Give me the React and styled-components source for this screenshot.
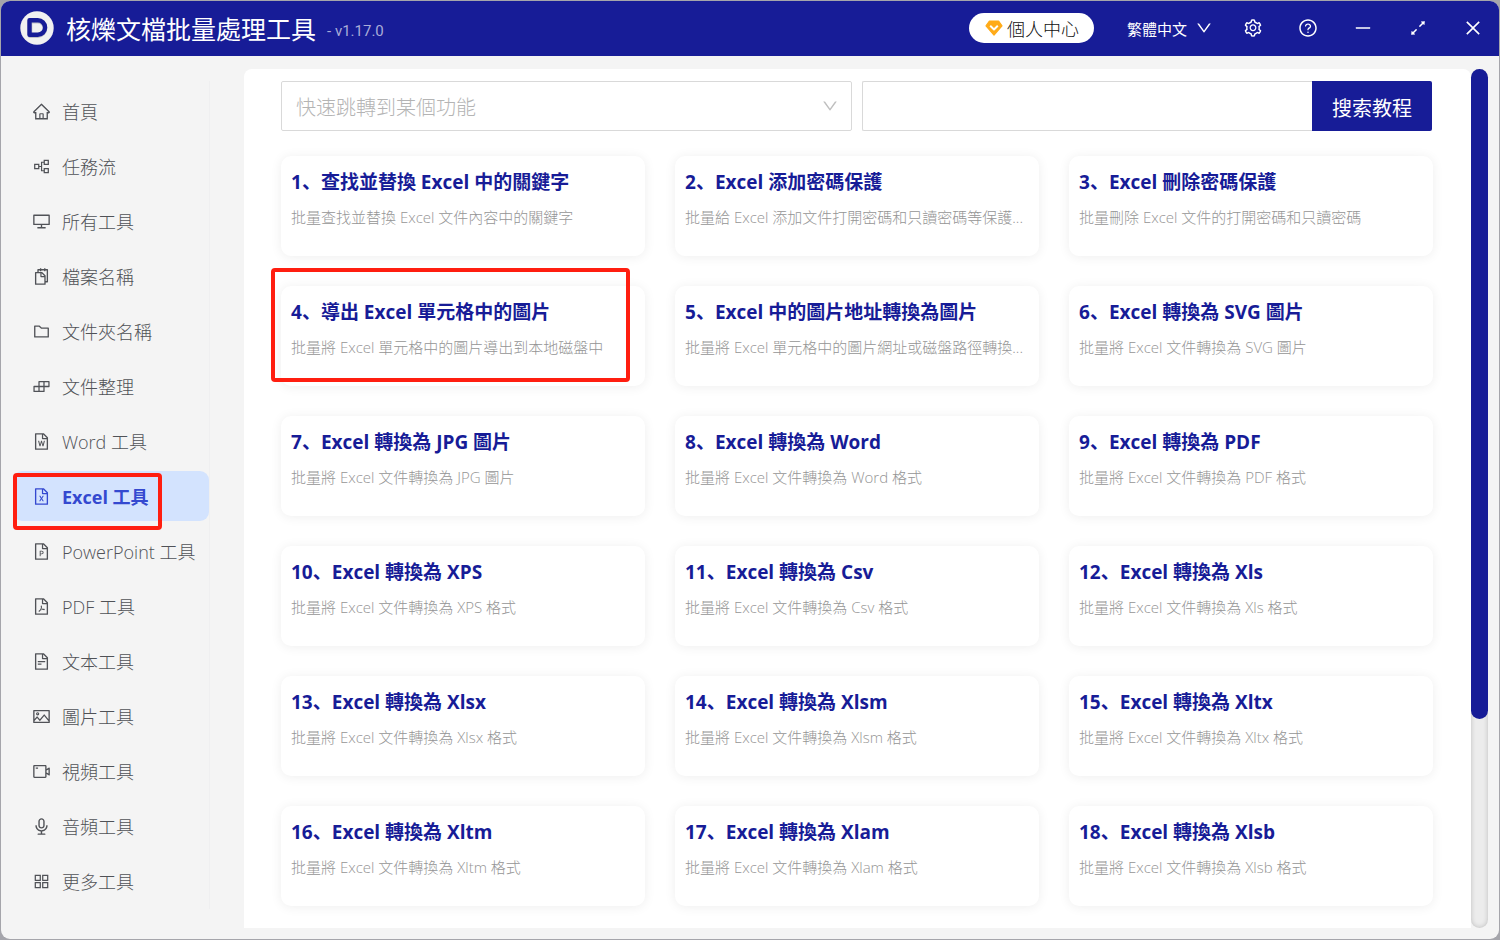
import React from "react";
import styled, { createGlobalStyle, css } from "styled-components";
import {
  AiOutlineHome, AiOutlinePartition, AiOutlineDesktop, AiOutlineSnippets, AiOutlineFolder,
  AiOutlineBuild, AiOutlineFileWord, AiOutlineFileExcel, AiOutlineFilePpt, AiOutlineFilePdf,
  AiOutlineFileText, AiOutlinePicture, AiOutlineVideoCamera, AiOutlineAudio, AiOutlineAppstore,
  AiOutlineDown, AiOutlineSetting, AiOutlineQuestionCircle, AiOutlineMinus,
  AiOutlineArrowsAlt, AiOutlineClose,
} from "react-icons/ai";

const navy = "#171c97";

const GlobalStyle = createGlobalStyle`
  * { box-sizing: border-box; }
  body {
    margin: 0;
    background: #a5a5ab;
    font-family: "Open Sans", "Noto Sans", "Noto Sans CJK SC", sans-serif;
  }
  button, input, select { font: inherit; }
`;

const Window = styled.div`
  min-height: calc(100vh - 2px);
  margin: 1px;
  display: flex;
  flex-direction: column;
  background: #f4f4f4;
  border-radius: 9px;
  overflow: hidden;
`;

const TitleBar = styled.header`
  display: flex;
  align-items: center;
  height: 55px;
  padding: 0 8px 1px 19px;
  background: ${navy};
  color: #fff;
`;

const AppName = styled.h1`
  margin: 2px 0 0 12px;
  font-size: 25px;
  line-height: 36px;
  font-weight: 400;
`;

const Version = styled.span`
  margin: 5px auto 0 11px;
  font-family: Roboto, sans-serif;
  font-size: 15px;
  color: #a9acd8;
`;

const AccountButton = styled.button`
  display: flex;
  align-items: center;
  gap: 4px;
  height: 30px;
  padding: 0 15px 0 16px;
  border: 0;
  border-radius: 15px;
  background: #fff;
  color: #111;
  font-size: 18px;
  font-weight: 300;
`;

const LanguageButton = styled.button`
  display: flex;
  align-items: center;
  gap: 8px;
  margin: 0 22px 0 33px;
  padding: 0;
  border: 0;
  background: none;
  color: #fff;
  font-size: 15px;
`;

const WindowActions = styled.div`
  display: flex;
  gap: 19px;
`;

const IconButton = styled.button`
  display: flex;
  align-items: center;
  justify-content: center;
  width: 36px;
  height: 36px;
  padding: 0;
  border: 0;
  background: none;
  color: #fff;
`;

const Body = styled.div`
  flex: 1;
  display: flex;
  padding: 13px 11px 11px 12px;
`;

const Sidebar = styled.nav`
  flex: 0 0 196px;
  display: flex;
  flex-direction: column;
  gap: 5px;
  margin: 12px 35px 19px 0;
  padding-top: 5px;
  box-shadow: 1px 0 0 #efeff0;
`;

const NavItem = styled.a`
  position: relative;
  display: flex;
  align-items: center;
  gap: 11px;
  height: 50px;
  padding-left: 19px;
  border-radius: 9px;
  color: #505257;
  font-size: 18px;
  font-weight: 300;
  white-space: nowrap;
  text-decoration: none;
  ${(p) => p.$active && css`
    background: #d3e3fe;
    color: #3449d0;
    font-weight: 700;
  `}
`;

const NavLabel = styled.span`
  padding-bottom: 1px;
`;

const Marker = styled.span`
  position: absolute;
  border: 4px solid #ff1e10;
  border-radius: 4px;
  pointer-events: none;
`;

const NavMarker = styled(Marker)`
  top: 2px;
  left: 0;
  width: 149px;
  height: 57px;
`;

const CardMarker = styled(Marker)`
  top: -18px;
  left: -10px;
  width: 359px;
  height: 114px;
`;

const Panel = styled.main`
  flex: 1;
  min-width: 0;
  padding: 12px 38px 22px 37px;
  background: #fff;
  border-radius: 8px 8px 0 0;
`;

const SearchRow = styled.div`
  display: flex;
  gap: 10px;
  margin: 0 1px 25px 0;
`;

const JumpField = styled.div`
  position: relative;
  flex: 1;
  color: #bfbfbf;
`;

const JumpSelect = styled.select`
  appearance: none;
  width: 100%;
  height: 50px;
  padding: 3px 40px 0 14px;
  border: 1px solid #d9d9d9;
  border-radius: 2px;
  background: #fff;
  color: #b4b4b4;
  font-size: 20px;
  font-weight: 300;
`;

const JumpArrow = styled(AiOutlineDown)`
  position: absolute;
  top: 16px;
  right: 13px;
  pointer-events: none;
`;

const TutorialSearch = styled.form`
  flex: 1;
  display: flex;
`;

const SearchInput = styled.input`
  flex: 1;
  min-width: 0;
  height: 50px;
  padding: 0 14px;
  border: 1px solid #d9d9d9;
  border-right: 0;
  border-radius: 2px 0 0 2px;
  font-size: 20px;
`;

const SearchButton = styled.button`
  width: 120px;
  padding: 2px 0 0;
  border: 0;
  border-radius: 0 2px 2px 0;
  background: ${navy};
  color: #fff;
  font-size: 20px;
`;

const CardGrid = styled.div`
  display: grid;
  grid-template-columns: repeat(3, minmax(0, 1fr));
  gap: 30px;
`;

const Card = styled.article`
  position: relative;
  height: 100px;
  padding: 12px 10px;
  border-radius: 10px;
  background: #fff;
  box-shadow: 0 1px 12px rgba(0, 0, 0, 0.07);
`;

const CardTitle = styled.h2`
  margin: 0 0 9px;
  color: ${navy};
  font-size: 19px;
  line-height: 28px;
  font-weight: 700;
  white-space: nowrap;
`;

const CardText = styled.p`
  margin: 0;
  color: #959595;
  font-size: 15px;
  line-height: 24px;
  font-weight: 300;
  white-space: nowrap;
  overflow: hidden;
  text-overflow: ellipsis;
`;

const ScrollTrack = styled.div`
  flex: 0 0 17px;
  display: flex;
  flex-direction: column;
  border-radius: 9px;
  background: #ececec;
  box-shadow: inset 0 0 5px rgba(0, 0, 0, 0.2);
  &::after { content: ""; flex: 209; }
`;

const ScrollThumb = styled.div`
  flex: 650;
  border-radius: 9px;
  background: ${navy};
`;

const Logo = () => (
  <svg width="34" height="34" viewBox="0 0 34 34" aria-hidden="true">
    <circle cx="17" cy="17" r="16.7" fill="#f1f1f1" />
    <path d="M10 10.2h7.8a7.2 7.2 0 0 1 0 14.4H10z" fill="none" stroke="#c0c0c6" strokeWidth="4.6" strokeLinejoin="round" />
    <path d="M9.5 9.2h8.3a7.2 7.2 0 0 1 0 14.6H9.5z" fill="none" stroke={navy} strokeWidth="4.4" strokeLinejoin="round" />
  </svg>
);

const Diamond = () => (
  <svg width="18" height="16" viewBox="0 0 18 16" aria-hidden="true">
    <path d="M4.4 1h9.2l3.4 4.8L9 15 1 5.8z" fill="#ffab19" stroke="#ffab19" strokeWidth="1.2" strokeLinejoin="round" />
    <path d="M5.2 5.8 9 9.4l3.8-3.6" fill="none" stroke="#fff" strokeWidth="2" strokeLinejoin="round" />
  </svg>
);

const navItems = [
  [AiOutlineHome, "首頁"],
  [AiOutlinePartition, "任務流"],
  [AiOutlineDesktop, "所有工具"],
  [AiOutlineSnippets, "檔案名稱"],
  [AiOutlineFolder, "文件夾名稱"],
  [AiOutlineBuild, "文件整理"],
  [AiOutlineFileWord, "Word 工具"],
  [AiOutlineFileExcel, "Excel 工具"],
  [AiOutlineFilePpt, "PowerPoint 工具"],
  [AiOutlineFilePdf, "PDF 工具"],
  [AiOutlineFileText, "文本工具"],
  [AiOutlinePicture, "圖片工具"],
  [AiOutlineVideoCamera, "視頻工具"],
  [AiOutlineAudio, "音頻工具"],
  [AiOutlineAppstore, "更多工具"],
];

const convert = (format) => [`Excel 轉換為 ${format}`, `批量將 Excel 文件轉換為 ${format} 格式`];

const tools = [
  ["查找並替換 Excel 中的關鍵字", "批量查找並替換 Excel 文件內容中的關鍵字"],
  ["Excel 添加密碼保護", "批量給 Excel 添加文件打開密碼和只讀密碼等保護..."],
  ["Excel 刪除密碼保護", "批量刪除 Excel 文件的打開密碼和只讀密碼"],
  ["導出 Excel 單元格中的圖片", "批量將 Excel 單元格中的圖片導出到本地磁盤中"],
  ["Excel 中的圖片地址轉換為圖片", "批量將 Excel 單元格中的圖片網址或磁盤路徑轉換..."],
  ["Excel 轉換為 SVG 圖片", "批量將 Excel 文件轉換為 SVG 圖片"],
  ["Excel 轉換為 JPG 圖片", "批量將 Excel 文件轉換為 JPG 圖片"],
  ...["Word", "PDF", "XPS", "Csv", "Xls", "Xlsx", "Xlsm", "Xltx", "Xltm", "Xlam", "Xlsb"].map(convert),
];

export default function App() {
  return (
    <>
      <GlobalStyle />
      <Window lang="zh-Hans">
        <TitleBar>
          <Logo />
          <AppName>核爍文檔批量處理工具</AppName>
          <Version>- v1.17.0</Version>
          <AccountButton type="button"><Diamond />個人中心</AccountButton>
          <LanguageButton type="button">繁體中文<AiOutlineDown size={18} /></LanguageButton>
          <WindowActions>
            <IconButton type="button" aria-label="設置"><AiOutlineSetting size={20} /></IconButton>
            <IconButton type="button" aria-label="幫助"><AiOutlineQuestionCircle size={20} /></IconButton>
            <IconButton type="button" aria-label="最小化"><AiOutlineMinus size={20} /></IconButton>
            <IconButton type="button" aria-label="最大化"><AiOutlineArrowsAlt size={20} /></IconButton>
            <IconButton type="button" aria-label="關閉"><AiOutlineClose size={20} /></IconButton>
          </WindowActions>
        </TitleBar>
        <Body>
          <Sidebar>
            {navItems.map(([Icon, label]) => {
              const active = label === "Excel 工具";
              return (
                <NavItem key={label} href="#" $active={active} aria-current={active ? "page" : undefined}>
                  <Icon size={19} />
                  <NavLabel>{label}</NavLabel>
                  {active && <NavMarker />}
                </NavItem>
              );
            })}
          </Sidebar>
          <Panel>
            <SearchRow>
              <JumpField>
                <JumpSelect aria-label="快速跳轉到某個功能" defaultValue="">
                  <option value="">快速跳轉到某個功能</option>
                </JumpSelect>
                <JumpArrow size={18} />
              </JumpField>
              <TutorialSearch onSubmit={(e) => e.preventDefault()}>
                <SearchInput type="text" aria-label="搜索教程" />
                <SearchButton type="submit">搜索教程</SearchButton>
              </TutorialSearch>
            </SearchRow>
            <CardGrid>
              {tools.map(([title, text], i) => (
                <Card key={title}>
                  <CardTitle>{i + 1}、{title}</CardTitle>
                  <CardText>{text}</CardText>
                  {i === 3 && <CardMarker />}
                </Card>
              ))}
            </CardGrid>
          </Panel>
          <ScrollTrack><ScrollThumb /></ScrollTrack>
        </Body>
      </Window>
    </>
  );
}
